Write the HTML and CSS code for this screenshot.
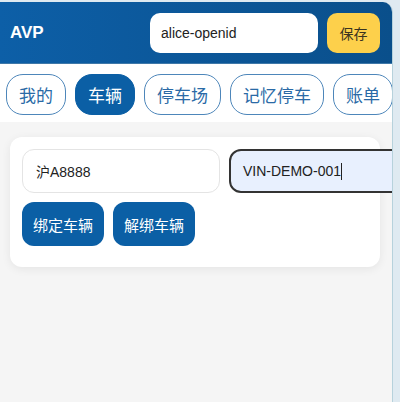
FILE: index.html
```html
<!DOCTYPE html>
<html lang="zh-CN">
	<head>
		<meta charset="UTF-8" />
		<meta name="viewport" content="width=device-width, initial-scale=1.0" />
		<title>AVP</title>
		<link rel="stylesheet" href="styles.css">
	</head>

	<body>
		<div class="app">
			<header class="topbar">
				<div class="brand">AVP</div>
				<div class="user-box">
					<input class="user-input" type="text" value="alice-openid" />
					<button class="save-btn">保存</button>
				</div>
			</header>

			<!-- Tabs -->
			<nav class="tabs">
				<button class="tab">我的</button>
				<button class="tab active">车辆</button>
				<button class="tab">停车场</button>
				<button class="tab">记忆停车</button>
				<button class="tab">账单</button>
			</nav>

			<main class="content">
				<div class="card">
					<div class="field-row">
						<input class="field" type="text" value="沪A8888" />
						<div class="field focused">VIN-DEMO-001<span class="caret"></span></div>
					</div>
					<div class="btn-row">
						<button class="primary-btn">绑定车辆</button>
						<button class="primary-btn">解绑车辆</button>
					</div>
				</div>
			</main>
		</div>
	</body>
</html>
```

FILE: styles.css
```css
* {
	box-sizing: border-box;
}

body {
	margin: 0;
	height: 402px;
	overflow: hidden;
	background-color: #dfeaf1;
	font-family: "Liberation Sans", "Noto Sans CJK SC", sans-serif;
}

.app {
	width: 393px;
	height: 400px;
	margin-top: 2px;
	overflow: hidden;
	background-color: #f5f5f5;
	border-right: 1px solid #b7d2dc;
	border-top-right-radius: 10px;
}

.topbar {
	height: 62px;
	display: flex;
	align-items: center;
	justify-content: space-between;
	padding: 0 12px 0 10px;
	background: linear-gradient(90deg, #0d5fa7, #0a4f8b);
	border-bottom: 1px solid #3f78a8;
}

.brand {
	color: #fff;
	font-weight: bold;
	font-size: 17px;
}

.user-box {
	display: flex;
	gap: 9px;
}

.user-input {
	width: 168px;
	height: 40px;
	border: none;
	border-radius: 10px;
	padding: 0 11px;
	font-family: inherit;
	font-size: 14px;
	color: #222;
	background-color: #fff;
}

.save-btn {
	width: 53px;
	height: 40px;
	border: none;
	border-radius: 10px;
	background-color: #fdd04b;
	color: #3a3320;
	font-family: inherit;
	font-size: 14px;
}

.tabs {
	display: flex;
	gap: 9px;
	padding: 10px 6px 7px;
	background-color: #fff;
	white-space: nowrap;
}

.tab {
	flex: none;
	height: 41px;
	padding: 0 12px;
	border: 1px solid #4d86ba;
	border-radius: 17px;
	background-color: #fff;
	color: #2a6aa6;
	font-family: inherit;
	font-size: 17px;
}

.tab.active {
	background-color: #0b5fa5;
	border-color: #0b5fa5;
	color: #fff;
}

.content {
	padding: 15px 12px 15px 10px;
}

.card {
	background-color: #fff;
	border-radius: 12px;
	padding: 12px 12px 21px;
	box-shadow: 0 2px 10px rgba(0, 0, 0, 0.07);
}

.field-row {
	display: flex;
	gap: 9px;
	margin-bottom: 9px;
}

.field {
	flex: none;
	width: 198px;
	height: 44px;
	border: 1px solid #e4e4e4;
	border-radius: 12px;
	padding: 0 13px;
	font-family: inherit;
	font-size: 14px;
	color: #222;
	background-color: #fff;
}

.field.focused {
	display: flex;
	align-items: center;
	border: 2px solid #333;
	padding: 0 12px;
	background-color: #e8f0fe;
}

.caret {
	display: inline-block;
	width: 1px;
	height: 17px;
	background-color: #222;
}

.btn-row {
	display: flex;
	gap: 9px;
}

.primary-btn {
	height: 44px;
	padding: 0 11px;
	border: none;
	border-radius: 12px;
	background-color: #0b5fa5;
	color: #fff;
	font-family: inherit;
	font-size: 15px;
}
```
